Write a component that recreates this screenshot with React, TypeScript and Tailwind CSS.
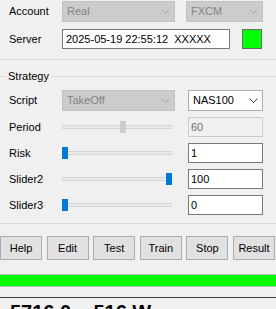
import React from 'react';

const Chevron: React.FC<{ color: string }> = ({ color }) => (
  <svg width="9" height="5" viewBox="0 0 9 5" className="shrink-0">
    <polyline points="0.5,0.5 4.5,4.5 8.5,0.5" fill="none" stroke={color} strokeWidth="1" />
  </svg>
);

const Label: React.FC<{ text: string }> = ({ text }) => (
  <div className="w-[62px] shrink-0 pl-[9px]">{text}</div>
);

const Combo: React.FC<{ value: string; width: string; disabled?: boolean }> = ({ value, width, disabled }) => (
  <div
    className={`${width} h-[21px] shrink-0 flex items-center justify-between pl-[4px] pr-[4px] border ${
      disabled ? 'bg-[#cccccc] border-[#c2c2c2] text-[#838383]' : 'bg-white border-[#adadad] text-black'
    }`}
  >
    <span>{value}</span>
    <Chevron color={disabled ? '#a6a6a6' : '#3c3c3c'} />
  </div>
);

const Slider: React.FC<{ left: number; disabled?: boolean }> = ({ left, disabled }) => (
  <div className="relative w-[110px] h-[14px] shrink-0 flex items-center">
    <div className="w-full h-[4px] bg-[#e7eaea] border border-[#d6d6d6]" />
    <div
      className={`absolute top-[1px] w-[6px] h-[12px] ${disabled ? 'bg-[#cccccc]' : 'bg-[#0078d7]'}`}
      style={{ left }}
    />
  </div>
);

const Edit: React.FC<{ value: string; disabled?: boolean }> = ({ value, disabled }) => (
  <div
    className={`ml-[16px] w-[75px] h-[20px] shrink-0 flex items-center pl-[2px] border ${
      disabled ? 'bg-[#f0f0f0] border-[#cccccc] text-[#6d6d6d]' : 'bg-white border-[#7a7a7a] text-black'
    }`}
  >
    {value}
  </div>
);

const SliderRow: React.FC<{ label: string; left: number; value: string; disabled?: boolean }> = ({
  label,
  left,
  value,
  disabled,
}) => (
  <div className="mt-[6px] flex h-[20px] items-center">
    <Label text={label} />
    <Slider left={left} disabled={disabled} />
    <Edit value={value} disabled={disabled} />
  </div>
);

const buttons = ['Help', 'Edit', 'Test', 'Train', 'Stop', 'Result'];

export default function App() {
  return (
    <div className="w-[276px] h-[309px] overflow-hidden bg-[#f0f0f0] text-[11px] leading-none text-black font-['Liberation_Sans',Arial,sans-serif]">
      {/* account */}
      <div className="mt-[1px] flex h-[21px] items-center">
        <Label text="Account" />
        <Combo value="Real" width="w-[113px]" disabled />
        <div className="ml-[11px]">
          <Combo value="FXCM" width="w-[77px]" disabled />
        </div>
      </div>

      {/* server */}
      <div className="mt-[7px] flex h-[20px] items-center">
        <Label text="Server" />
        <div className="w-[168px] h-[20px] shrink-0 flex items-center pl-[3px] bg-white border border-[#7a7a7a]">
          2025-05-19 22:55:12&nbsp;&nbsp;XXXXX
        </div>
        <div className="ml-[12px] w-[20px] h-[20px] bg-[#00ff00] border border-[#6b6b6b]" />
      </div>

      <div className="mt-[10px] h-px bg-[#dadada]" />

      {/* strategy group */}
      <div className="mt-[10px] flex h-[13px] items-center">
        <div className="w-[6px] h-px bg-[#dadada]" />
        <span className="mx-[2px]">Strategy</span>
        <div className="flex-1 h-px bg-[#dadada]" />
      </div>

      <div className="mt-[7px] flex h-[21px] items-center">
        <Label text="Script" />
        <Combo value="TakeOff" width="w-[113px]" disabled />
        <div className="ml-[13px]">
          <Combo value="NAS100" width="w-[75px]" />
        </div>
      </div>

      <div className="mt-[3px]" />
      <SliderRow label="Period" left={58} value="60" disabled />
      <SliderRow label="Risk" left={0} value="1" />
      <SliderRow label="Slider2" left={104} value="100" />
      <SliderRow label="Slider3" left={0} value="0" />

      <div className="mt-[8px] h-px bg-[#dadada]" />

      {/* buttons */}
      <div className="mt-[12px] flex h-[24px] gap-[4.6px]">
        {buttons.map((b) => (
          <div
            key={b}
            className="w-[42px] h-[24px] shrink-0 flex items-center justify-center bg-[#e1e1e1] border border-[#adadad]"
          >
            {b}
          </div>
        ))}
      </div>

      {/* progress */}
      <div className="mt-[14px] h-[13px] bg-[#00ff00] border-y border-[#bcbcbc]" />

      {/* readout */}
      <div className="mt-[10px] border-t border-[#3c3c3c] pl-[10px] pt-[4px] text-[20px] font-bold whitespace-pre">
        5716.0    516 W
      </div>
    </div>
  );
}
